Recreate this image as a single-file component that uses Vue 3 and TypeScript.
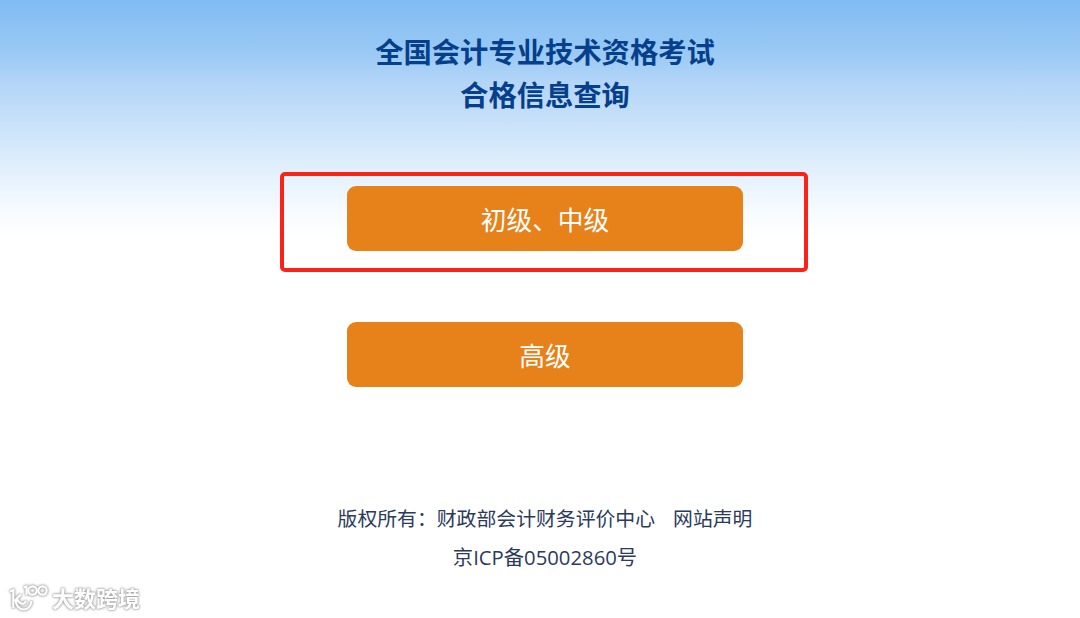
<script setup lang="ts">
const titleLines: string[] = ['全国会计专业技术资格考试', '合格信息查询']
</script>

<template>
  <main class="page">
    <h1 class="title">
      <span v-for="line in titleLines" :key="line">{{ line }}</span>
    </h1>
    <div class="highlight">
      <button class="entry" type="button">初级、中级</button>
    </div>
    <button class="entry senior" type="button">高级</button>
    <footer class="footer">
      <p><span>版权所有：财政部会计财务评价中心</span><span class="statement">网站声明</span></p>
      <p class="record">京ICP备05002860号</p>
    </footer>
    <div class="watermark">
      <svg class="mark" width="42" height="32" viewBox="0 0 42 32" fill="none">
        <path d="M2 8.5 L5.3 7.2 V25 M13 11.5 L7.5 17 C9 30 22.5 29 23.5 18 M9 16 C12 22 16 22 18 18 M16 4.5 L18.5 3.5 V12" />
        <circle cx="24.5" cy="7.5" r="4.2" />
        <circle cx="34.5" cy="7.5" r="4.2" />
      </svg>
      <span class="brand">大数跨境</span>
    </div>
  </main>
</template>

<style>
body {
  margin: 0;
}
</style>

<style scoped>
.page {
  position: relative;
  box-sizing: border-box;
  width: 1080px;
  height: 618px;
  padding: 29px 0 0 10px;
  overflow: hidden;
  display: flex;
  flex-direction: column;
  align-items: center;
  background: linear-gradient(#80bbf2 0, #9bcaf5 55px, #b3d5f8 82px, #cee4fa 132px, #e5f1fc 175px, #f8fcff 215px, #fff 242px);
  font-family: "Open Sans", "Noto Sans CJK SC", sans-serif;
}
.title {
  display: flex;
  flex-direction: column;
  align-items: center;
  margin: 0;
  color: #063f8b;
  font-family: "Noto Sans CJK SC", sans-serif;
  font-size: 28.3px;
  font-weight: 700;
  line-height: 43px;
  white-space: nowrap;
}
.highlight {
  box-sizing: border-box;
  width: 528px;
  height: 100px;
  margin: 57px 2px 0 0;
  padding: 10px 0 0 2px;
  border: 4px solid #fb2218;
  border-radius: 5px;
  display: flex;
  justify-content: center;
  align-items: flex-start;
}
.entry {
  width: 396px;
  height: 65px;
  flex: none;
  padding: 0;
  border: 0;
  border-radius: 9px;
  background: #e7811a;
  color: #fff;
  font-family: "Noto Sans CJK SC", sans-serif;
  font-size: 25.7px;
  line-height: 65px;
}
.senior {
  margin-top: 50px;
}
.footer {
  margin-top: 112px;
  color: #2c3a5c;
  font-size: 19.85px;
  line-height: 39px;
  text-align: center;
  white-space: nowrap;
}
.footer p {
  margin: 0;
}
.footer .record {
  font-size: 20.3px;
}
.statement {
  margin-left: 18px;
}
.watermark {
  position: absolute;
  left: 8px;
  bottom: 3px;
  display: flex;
  align-items: center;
  filter: drop-shadow(0 0 1px #999) drop-shadow(0 0 1px #bbb);
}
.mark {
  stroke: #fff;
  stroke-width: 2.2;
}
.brand {
  margin: -4px 0 0 2px;
  color: #fff;
  font-family: "Noto Sans CJK SC", sans-serif;
  font-size: 22px;
  font-weight: 700;
  line-height: 32px;
}
</style>
